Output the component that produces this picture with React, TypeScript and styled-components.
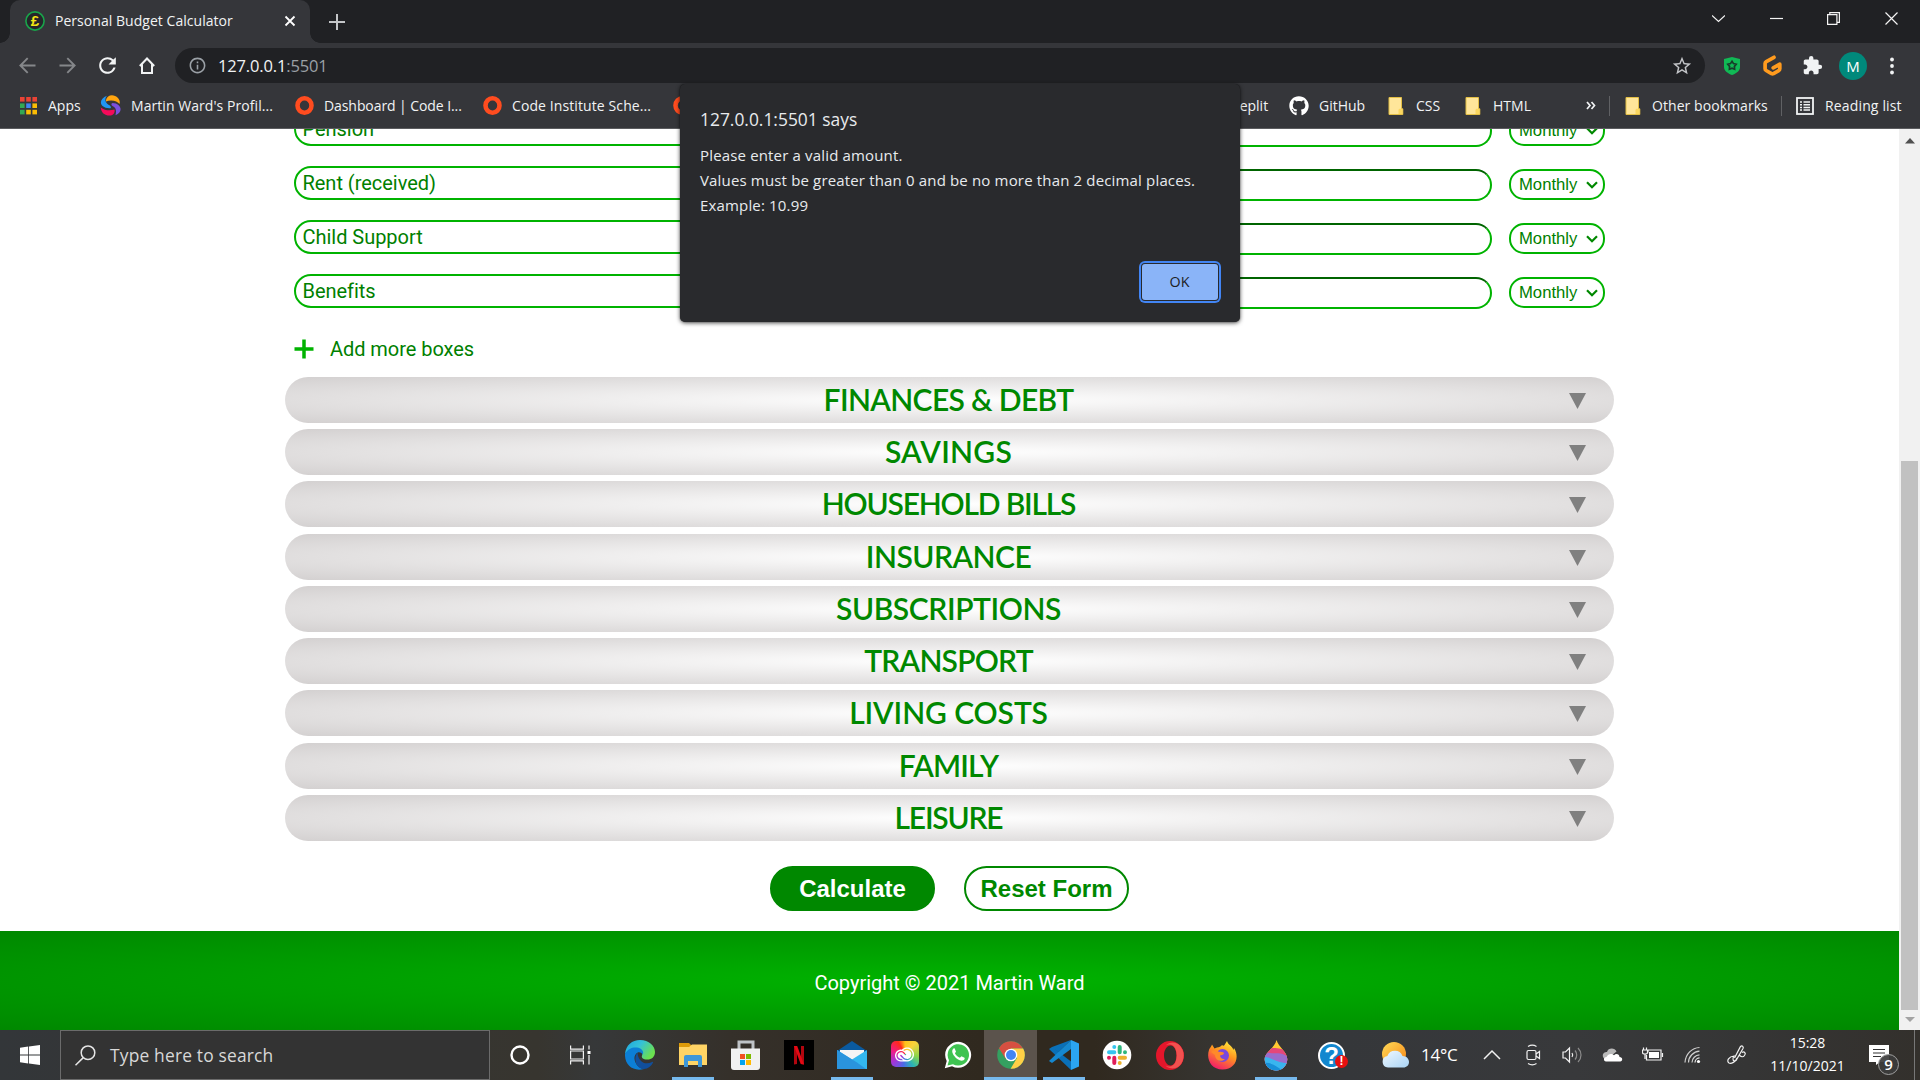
import React from "react";
import styled, { createGlobalStyle, css } from "styled-components";
import { FaGithub } from "react-icons/fa";
import { MdExtension, MdRefresh, MdStarBorder, MdInfoOutline } from "react-icons/md";
import { SiAdobecreativecloud } from "react-icons/si";

const ui = `"Open Sans", "Noto Sans", sans-serif`;
const arial = `"Liberation Sans", Arial, sans-serif`;
const roboto = `Roboto, "Liberation Sans", sans-serif`;

const GlobalStyle = createGlobalStyle`
  * { box-sizing: border-box; }
  html, body { margin: 0; padding: 0; background: #fff; overflow: hidden; }
  svg { display: block; flex: none; }
`;

const Screen = styled.div`
  position: relative;
  display: flex;
  flex-direction: column;
  width: 1920px;
  height: 1080px;
  overflow: hidden;
  font-family: ${ui};
`;

const Label = styled.span<{ $size?: number; $ls?: number; $color?: string }>`
  font-size: ${(p) => p.$size ?? 14}px;
  letter-spacing: ${(p) => p.$ls ?? 0}px;
  color: ${(p) => p.$color ?? "#f1f3f4"};
  white-space: nowrap;
  line-height: 20px;
`;

/* Browser chrome */
const TitleBar = styled.div`
  display: flex;
  height: 43px;
  padding-left: 10px;
  background: #202124;
`;

const tabFoot = css`
  content: "";
  position: absolute;
  bottom: 0;
  width: 10px;
  height: 10px;
`;

const Tab = styled.div`
  position: relative;
  display: flex;
  align-items: center;
  width: 300px;
  padding: 0 14px 2px 15px;
  border-radius: 10px 10px 0 0;
  background: #35363a;
  &::before {
    ${tabFoot}
    left: -10px;
    background: radial-gradient(circle at 0 0, transparent 9.5px, #35363a 10px);
  }
  &::after {
    ${tabFoot}
    right: -10px;
    background: radial-gradient(circle at 100% 0, transparent 9.5px, #35363a 10px);
  }
`;

const TabTitle = styled(Label)`
  flex: 1;
  padding-left: 10px;
`;

const NewTab = styled.div`
  display: flex;
  align-items: center;
  width: 54px;
  justify-content: center;
`;

const WindowControls = styled.div`
  display: flex;
  align-items: center;
  height: 37px;
  margin-left: auto;
`;

const ControlSlot = styled.div`
  display: flex;
  justify-content: center;
  width: 57.5px;
`;

const Toolbar = styled.div`
  display: flex;
  align-items: center;
  height: 45px;
  padding-left: 7px;
  background: #35363a;
`;

const ToolSlot = styled.div<{ $w?: number }>`
  display: flex;
  flex: none;
  justify-content: center;
  align-items: center;
  width: ${(p) => p.$w ?? 40}px;
  height: 35px;
`;

const AddressBar = styled.div`
  display: flex;
  flex: none;
  align-items: center;
  width: 1530px;
  height: 35px;
  margin-left: 8px;
  padding: 0 12px 0 13px;
  border-radius: 18px;
  background: #202124;
`;

const Url = styled(Label)`
  flex: 1;
  padding-left: 11px;
  em {
    font-style: normal;
    color: #9aa0a6;
  }
`;

const Avatar = styled.div`
  display: flex;
  align-items: center;
  justify-content: center;
  width: 28px;
  height: 28px;
  border-radius: 50%;
  background: #00897b;
  color: #fff;
  font-size: 15px;
`;

const BookmarkBar = styled.div`
  display: flex;
  align-items: center;
  height: 41px;
  padding: 0 0 5px 20px;
  border-bottom: 1px solid #5b5c5f;
  background: #35363a;
`;

const Bookmark = styled.div<{ $w: number; $gap?: number }>`
  display: flex;
  flex: none;
  align-items: center;
  gap: ${(p) => p.$gap ?? 10}px;
  width: ${(p) => p.$w}px;
  height: 24px;
`;

const BarDivider = styled.div<{ $gap: number }>`
  width: 1px;
  height: 20px;
  margin-right: ${(p) => p.$gap}px;
  background: #606164;
`;

/* Page */
const Viewport = styled.div`
  display: flex;
  height: 901px;
  overflow: hidden;
`;

const Page = styled.div`
  display: flex;
  flex-direction: column;
  align-items: center;
  width: 1899px;
  background: #fff;
`;

const Form = styled.main`
  width: 1329px;
  height: 802px;
  flex: none;
  overflow: hidden;
`;

const Rows = styled.div`
  display: flex;
  flex-direction: column;
  gap: 20px;
  margin-top: -17px;
  padding: 0 9px;
`;

const Row = styled.div`
  display: grid;
  grid-template-columns: 598px 1fr 96px;
  column-gap: 17px;
  height: 34px;
`;

const NameBox = styled.div`
  height: 34px;
  padding-left: 6.5px;
  border: 2px solid #00b300;
  border-radius: 17px;
  font: 20px/31px ${roboto};
  letter-spacing: -0.03px;
  color: #008000;
`;

const AmountBox = styled.div`
  height: 32px;
  margin-top: 3px;
  border: 2px solid #00b300;
  border-top-color: #006400;
  border-left-color: #006400;
  border-radius: 16px;
`;

const Period = styled.div`
  display: flex;
  align-items: center;
  justify-content: space-between;
  height: 31px;
  margin-top: 3px;
  padding: 0 5px 0 8px;
  border: 2px solid #00b300;
  border-radius: 15px;
  font: 16.67px/27px ${arial};
  color: #008000;
`;

const AddMore = styled.div`
  display: flex;
  align-items: center;
  gap: 16px;
  height: 69px;
  padding: 13px 0 0 9px;
  font: 20px/24px ${roboto};
  letter-spacing: -0.05px;
  color: #008000;
`;

const Sections = styled.div`
  display: flex;
  flex-direction: column;
  gap: 6.22px;
`;

const Section = styled.div`
  display: grid;
  grid-template-columns: 44px 1fr 46px;
  align-items: center;
  height: 46px;
  border-radius: 23px;
  background: radial-gradient(#fff, #d3d0d0);
  svg {
    margin: 2px 0 0 1px;
  }
`;

const SectionTitle = styled.h2<{ $ls: number }>`
  margin: 0;
  padding-bottom: 2px;
  grid-column: 2;
  text-align: center;
  font: 600 30px/44px Lato, sans-serif;
  letter-spacing: ${(p) => p.$ls}px;
  color: #008800;
`;

const Actions = styled.div`
  display: flex;
  justify-content: center;
  gap: 29px;
  padding-top: 25px;
`;

const Action = styled.button<{ $solid?: boolean }>`
  width: 165px;
  height: 45px;
  padding: 0;
  border: 2px solid #008800;
  border-radius: 23px;
  background: ${(p) => (p.$solid ? "#008800" : "#fff")};
  color: ${(p) => (p.$solid ? "#fff" : "#008800")};
  font: bold 24px/41px ${arial};
`;

const Footer = styled.footer`
  display: flex;
  align-items: center;
  justify-content: center;
  width: 100%;
  height: 99px;
  padding-top: 5px;
  background: radial-gradient(#00b300, #008800);
  color: #fff;
  font: 400 20px/24px ${roboto};
`;

const ScrollTrack = styled.div`
  display: flex;
  flex-direction: column;
  align-items: center;
  width: 21px;
  padding: 9px 0 8px;
  background: #f1f1f1;
`;

const ScrollThumb = styled.div`
  width: 17px;
  height: 549px;
  margin-top: auto;
  margin-bottom: 7px;
  background: #c1c1c1;
`;

/* Alert dialog, floats over the browser window */
const Dialog = styled.div`
  position: absolute;
  left: 680px;
  top: 84px;
  display: flex;
  flex-direction: column;
  width: 560px;
  height: 238px;
  padding: 22px 19px 19px 20px;
  border-radius: 5px;
  background: #292a2d;
  box-shadow: 0 1px 4px rgba(0, 0, 0, 0.7), 0 0 1px rgba(0, 0, 0, 0.6);
`;

const DialogTitle = styled.div`
  font-size: 17.4px;
  line-height: 26px;
  color: #e8eaed;
`;

const DialogText = styled.div`
  margin-top: 11px;
  display: flex;
  flex-direction: column;
`;

const DialogLine = styled(Label)`
  font-size: 15px;
  letter-spacing: 0.16px;
  line-height: 25px;
  color: #e8eaed;
`;

const OkButton = styled.button`
  align-self: flex-end;
  width: 76px;
  height: 36px;
  margin: auto 3px 3px 0;
  padding: 0 1px 0 0;
  border: 0;
  border-radius: 3px;
  background: #8ab4f8;
  box-shadow: 0 0 0 1px #292a2d, 0 0 0 3px #4285f4;
  color: #202124;
  font: 14.3px/36px ${ui};
`;

/* Taskbar */
const Taskbar = styled.div`
  display: flex;
  height: 50px;
  background: linear-gradient(90deg, #333639 0, #37352f 28%, #363839 31%, #35302a 38%, #30291f 51%, #30291f 57%, #363430 63%, #35373a 70%, #38393b 82%, #353535 91%, #33302c 100%);
`;

const StartSlot = styled.div`
  display: flex;
  flex: none;
  align-items: center;
  justify-content: center;
  width: 60px;
`;

const Search = styled.div`
  display: flex;
  flex: none;
  align-items: center;
  gap: 14px;
  width: 430px;
  padding-left: 14px;
  border: 1px solid #6b6b6b;
  background: #333;
`;

const AppButton = styled.div<{ $w?: number; $pad?: number; $active?: boolean; $running?: boolean }>`
  display: flex;
  flex: none;
  align-items: center;
  justify-content: center;
  position: relative;
  width: ${(p) => p.$w ?? 53}px;
  height: 50px;
  padding-left: ${(p) => p.$pad ?? 0}px;
  background: ${(p) => (p.$active ? "#5b534c" : "transparent")};
  &::after {
    content: "";
    position: absolute;
    bottom: 0;
    left: ${(p) => (p.$active ? 0 : 6)}px;
    right: ${(p) => (p.$active ? 0 : 5)}px;
    height: 3px;
    background: ${(p) => (p.$active || p.$running ? "#76b9ed" : "transparent")};
  }
`;

const TrayBar = styled.div`
  display: flex;
  flex: none;
  width: 538px;
  margin-left: auto;
`;

const TraySlot = styled.div<{ $w: number }>`
  display: flex;
  align-items: center;
  flex: none;
  width: ${(p) => p.$w}px;
`;

const Clock = styled.div`
  display: flex;
  flex-direction: column;
  align-items: center;
  justify-content: center;
  gap: 3px;
  width: 85px;
  padding-bottom: 1px;
`;

const NoteSlot = styled.div`
  position: relative;
  width: 48px;
  padding: 15px 0 0 19px;
`;

const NoteBadge = styled.div`
  position: absolute;
  left: 28px;
  top: 24px;
  width: 21px;
  height: 21px;
  border: 1px solid #a0a0a0;
  border-radius: 50%;
  background: rgba(60, 60, 60, 0.92);
  color: #fff;
  font: 600 15px/19px ${ui};
  text-align: center;
`;

const DesktopEdge = styled.div`
  width: 1px;
  margin-left: auto;
  margin-right: 5px;
  background: #777;
`;

const Favicon = () => (
  <svg width="20" height="20" viewBox="0 0 20 20">
    <circle cx="10" cy="10" r="9.100" fill="#25262a" stroke="#19a44a" strokeWidth="1.600" />
    <text x="10" y="15.200" textAnchor="middle" fontFamily="Liberation Sans" fontWeight="700" fontSize="15" fill="#f5e614">£</text>
  </svg>
);

const AppsGrid = () => {
  const c = ["#ea4335", "#ea4335", "#ea4335", "#34a853", "#4285f4", "#fbbc04", "#34a853", "#fbbc04", "#fbbc04"];
  return (
    <svg width="18" height="18" viewBox="0 0 18 18">
      {c.map((f, i) => (
        <rect key={i} x={(i % 3) * 6.2} y={Math.floor(i / 3) * 6.4} width="4.6" height="4.6" fill={f} />
      ))}
    </svg>
  );
};

const Swirl = () => (
  <svg width="21" height="21" viewBox="0 0 21 21">
    <path d="M7 .8C-1.500 4-1.500 12.500 9.500 13.300 12 13.500 11 11 8.500 9.800 5.500 8 4 4.500 7 .8z" fill="#2196f3" />
    <path d="M6 5C7-.5 14-1.500 18 3c2 2.500 2 4 1.500 6C17.500 6.500 12 4 6 6.500z" fill="#ffa50f" />
    <path d="M12.500 8c8.500 0 11.500 9 3 12.200 1-4.500.8-7.200-3-9.200-1.500-.9-1.500-2.700 0-3z" fill="#7b4fe0" />
    <path d="M.8 12.500c4 3 9 3.500 13.700 2 .6 2.500-.5 5.500-3.500 6C5.500 21.200 1 18 .8 12.500z" fill="#f50a5a" />
  </svg>
);

const Ring = () => (
  <svg width="19" height="19" viewBox="0 0 19 19">
    <ellipse cx="9.500" cy="9.500" rx="7" ry="7.200" fill="none" stroke="#ff4c1f" strokeWidth="4.600" />
  </svg>
);

const Folder = () => (
  <svg width="16" height="18" viewBox="0 0 16 18">
    <path d="M1 .5h12.500v11.300h1.300v5.700H1z" fill="#ffe69a" stroke="#e3bf45" />
    <path d="M10.500 17v-3.700c0-1 .6-1.500 1.500-1.500h2.500V17z" fill="#fbd75f" />
  </svg>
);

const ReadingList = () => (
  <svg width="18" height="18" viewBox="0 0 18 18" fill="none" stroke="#f1f3f4">
    <rect x="1" y="1" width="16" height="16" strokeWidth="1.800" />
    <path d="M4 5h2M4 7.700h2M4 10.400h2M4 13.100h2M7.500 5H14M7.500 7.700H14M7.500 10.400H14M7.500 13.100H14" strokeWidth="1.500" />
  </svg>
);

const Arrow = ({ flip }: { flip?: boolean }) => (
  <svg width="17" height="17" viewBox="0 0 17 17" fill="none" stroke="#85878a" strokeWidth="1.900" transform={flip ? "scale(-1,1)" : undefined}>
    <path d="M16.500 8.500H1.500M8.700 1.200 1.400 8.500l7.300 7.300" />
  </svg>
);

const WindowIcon = ({ d }: { d: string }) => (
  <svg width="13" height="13" viewBox="0 0 13 13" fill="none" stroke="#f4f4f4" strokeWidth="1.200">
    <path d={d} />
  </svg>
);

const Shield = () => (
  <svg width="16" height="18" viewBox="0 0 16 18">
    <path d="M8 0 16 2v8c0 4-4 6.500-8 8-4-1.500-8-4-8-8V2z" fill="#10b955" />
    <path d="m8 4.300 1.500 2.300 2.700.7-1.800 2.100.2 2.800L8 11.200l-2.600 1 .2-2.800-1.800-2.100 2.700-.7z" fill="none" stroke="#183b2a" strokeWidth="1.700" />
  </svg>
);

const Gitpod = () => (
  <svg width="19" height="21" viewBox="0 0 19 21" fill="none" stroke="#ff9b1e" strokeWidth="3.700" strokeLinejoin="round">
    <path d="M11 2.300 3.300 6.600c-.8.500-1.200 1-1.200 2v5.200c0 .8.300 1.300 1 1.700l5.400 3.100c.7.300 1.300.3 2 0l5.200-3c.7-.4 1.100-1 1.100-1.800V9.200l-6.600 3.600" strokeLinecap="round" />
  </svg>
);

const PeriodArrow = () => (
  <svg width="12" height="8" viewBox="0 0 12 8" fill="none" stroke="#008800" strokeWidth="2.200">
    <path d="m1 1.200 5 5 5-5" />
  </svg>
);

const EdgeIcon = () => (
  <svg width="30" height="30" viewBox="0 0 30 30">
    <defs>
      <linearGradient id="edgeTop" x1="0" y1="0" x2="1" y2=".5">
        <stop offset="0" stopColor="#1ba5e0" />
        <stop offset=".5" stopColor="#35c1d8" />
        <stop offset="1" stopColor="#6be04f" />
      </linearGradient>
    </defs>
    <path d="M0 14C1 5 7 0 15 0c9 0 15 6 15 12 0 5-3.500 7.500-7.500 7.500-5 0-6.500-2-5.300-4.500C19 9.500 8 5 0 14z" fill="url(#edgeTop)" />
    <path d="M0 14C3 8 8 7 12 7.500c5 .6 7 4 5.800 7-3.500-5-8.800-1-8.300 4.500.4 5 5 9.500 9.500 10C8 32-.5 25 0 14z" fill="#0c7fd6" />
    <path d="M12.500 12.700C8 18 11 29 19 29c4 0 7.500-3 9-6.500.2-.6-.3-.8-.8-.5-7 3.600-14-.2-14.700-9.300z" fill="#114f9c" />
  </svg>
);

const ExplorerIcon = () => (
  <svg width="28" height="24" viewBox="0 0 28 24">
    <path d="M0 0h10l3 3v3H0z" fill="#dd9b09" />
    <path d="M0 4h10l3-2.500h15V22H0z" fill="#ffd465" />
    <path d="M5 24V14q0-2 2-2h14q2 0 2 2v10h-4v-6H9v6z" fill="#3e97d8" />
  </svg>
);

const StoreIcon = () => (
  <svg width="30" height="30" viewBox="0 0 30 30">
    <path d="M8 9V2h14v7" fill="none" stroke="#bfc3c6" strokeWidth="3" />
    <path d="M0 8.500h29V27q0 3-3 3H3q-3 0-3-3z" fill="#f1f1f1" />
    <rect x="9" y="14" width="5" height="5" fill="#f25022" />
    <rect x="15" y="14" width="5" height="5" fill="#7fba00" />
    <rect x="9" y="20" width="5" height="5" fill="#00a4ef" />
    <rect x="15" y="20" width="5" height="5" fill="#ffb900" />
  </svg>
);

const NetflixIcon = () => (
  <svg width="30" height="30" viewBox="0 0 30 30">
    <rect width="30" height="30" fill="#000" />
    <path d="M10 6h3v18l-3 .5zM17 6h3v18.500l-3-.5z" fill="#b1060f" />
    <path d="M10 6h3.200L20 24.500l-3.300-.5z" fill="#e50914" />
  </svg>
);

const MailIcon = () => (
  <svg width="30" height="28" viewBox="0 0 30 28">
    <path d="M0 10 15 0l15 10v6H0z" fill="#0a5a9f" />
    <path d="M3 9h24v8L15 22 3 16z" fill="#f5f5f5" />
    <path d="m0 9 15 9.500L30 9v19H0z" fill="#33b7ef" />
    <path d="m0 9 20 12.500L29 28H0z" fill="#2a94dd" />
  </svg>
);

const CreativeTile = styled.div`
  display: flex;
  align-items: center;
  justify-content: center;
  width: 28px;
  height: 26px;
  margin-bottom: 2px;
  border-radius: 5px;
  background: conic-gradient(#ffc21a, #f7d13c 12%, #8bd64a 28%, #2bb5b4 40%, #4a6be8 52%, #a136d8 65%, #ec1c8c 78%, #ff2a1a 92%, #ffc21a);
`;

const WhatsAppIcon = () => (
  <svg width="28" height="28" viewBox="0 0 28 28">
    <path d="M.8 27.200 2.700 20A13 13 0 1 1 8 25.300z" fill="#fff" />
    <path d="m3.500 24.400 1.500-5.200a10.700 10.700 0 1 1 4 4z" fill="#3fc351" />
    <path d="M9.500 7.500c-2 1.500-1.500 4.500.8 7.500 2.500 3.500 6.500 5.700 9.200 4.200 1-.6 1.500-2 1-2.500l-3-1.500-1.600 1.600c-2-.6-4-2.500-5-4.500l1.100-1.500-1.200-3.100c-.2-.4-.9-.4-1.300-.2z" fill="#fff" />
  </svg>
);

const ChromeIcon = () => (
  <svg width="28" height="28" viewBox="0 0 28 28">
    <circle cx="14" cy="14" r="13.800" fill="#34a060" />
    <path d="M14 14 2 7.200A13.800 13.800 0 0 1 26 7.500H14z" fill="#d64f41" />
    <path d="M14 7.500h12.200A13.800 13.800 0 0 1 13.600 27.800L20 17z" fill="#ffcf46" />
    <path d="M2 7.200 8.400 17.500 14 14V7.500z" fill="#d64f41" />
    <circle cx="14" cy="14" r="6.300" fill="#fff" />
    <circle cx="14" cy="14" r="5" fill="#4285f4" />
  </svg>
);

const CodeIcon = () => (
  <svg width="30" height="30" viewBox="0 0 30 30">
    <path d="M22 0 9.500 12 3 7 0 9l22 21V21.500L3 7z" fill="#0a70b8" />
    <path d="M22 9 3 23l-3-2L22 0z" fill="#1588d0" />
    <path d="m22 0 8 3.500v23L22 30z" fill="#2ba5f2" />
  </svg>
);

const SlackIcon = () => (
  <svg width="30" height="30" viewBox="0 0 30 30" strokeWidth="4" strokeLinecap="round">
    <circle cx="15" cy="15" r="14.300" fill="#fff" />
    <path d="M12.300 7v0M7 12.300h5.300" stroke="#36c5f0" />
    <path d="M17.700 7v5.300M23 12.300v0" stroke="#2eb67d" />
    <path d="M12.300 17.700V23M7 17.700v0" stroke="#e01e5a" />
    <path d="M17.700 17.700H23M17.700 23v0" stroke="#ecb22e" />
  </svg>
);

const OperaIcon = () => (
  <svg width="28" height="29" viewBox="0 0 28 29">
    <path fillRule="evenodd" d="M14 0a14 14.500 0 1 0 0 29A14 14.500 0 1 0 14 0zm.5 4.500c3.600 0 6 4.500 6 10s-2.400 10-6 10-6.500-4.500-6.500-10 2.900-10 6.500-10z" fill="#e4162b" />
    <path d="M9.500 4.500C14 0 20 1 23.500 4.200a14 14.500 0 0 1 0 20.600C20 28 14 29 9.500 24.500c4 2 8 .8 10-3.500 1.600-4 1.600-9 0-13-2-4.300-6-5.500-10-3.500z" fill="#f2514f" />
  </svg>
);

const FirefoxIcon = () => (
  <svg width="29" height="29" viewBox="0 0 29 29">
    <defs>
      <linearGradient id="fox" x1=".8" y1="0" x2=".3" y2="1">
        <stop offset="0" stopColor="#fff13d" />
        <stop offset=".45" stopColor="#ff9420" />
        <stop offset="1" stopColor="#f2186c" />
      </linearGradient>
    </defs>
    <path d="M4 3.500 6.500 7.500 9 6.500c2 0 4-1 5-2.500 1 1 2 1 2.500 0L19 0c1 4 5 4.500 6.500 9L26 7c6 9 1.500 21.500-11.500 21.500C3 28.500-2 18 1 9c.7-2 1.500-2 3-5.500z" fill="url(#fox)" />
    <circle cx="14.500" cy="14.500" r="6.500" fill="#7a48dc" />
    <path d="M3 11c4-2 7-1 8 0 3-.5 5 .5 5 1.500-1 1.500-3 1.500-4 2 0 2 2 4 5 3.500-4 4-10 1-10-4z" fill="#ff8a2a" />
  </svg>
);

const PaintIcon = () => (
  <svg width="24" height="31" viewBox="0 0 24 31">
    <defs>
      <clipPath id="drop">
        <path d="M12.500 0c2 7 11 12 10.800 19.500C23 26 18 30.500 12 30.500S1 26 .7 19.500C.5 12 11 8 12.500 0z" />
      </clipPath>
    </defs>
    <g clipPath="url(#drop)">
      <rect width="24" height="31" fill="#ffc832" />
      <path d="M0 8c8 0 14-1 24 3v20H0z" fill="#e4477a" />
      <path d="M0 11c8 5 15-1 24 6v14H0z" fill="#9a6ccc" />
      <path d="M0 17c8 0 12 6 24 6v8H0z" fill="#39b5ee" />
      <path d="M0 23c8-1 13 4 20 8H0z" fill="#1890d8" />
    </g>
  </svg>
);

const HelpMark = styled.div`
  position: relative;
  width: 27px;
  height: 27px;
  border: 2px solid #fff;
  border-radius: 50%;
  background: #1287cf;
  color: #fff;
  font: bold 24px/23px ${arial};
  text-align: center;
`;

const HelpAlert = styled.div`
  position: absolute;
  right: -5px;
  bottom: -1px;
  width: 13px;
  height: 13px;
  border-radius: 50%;
  background: #e81010;
  font: bold 12px/13px ${arial};
`;

const WeatherIcon = () => (
  <svg width="27" height="26" viewBox="0 0 27 26">
    <defs>
      <linearGradient id="sun" x1="0" y1="0" x2="1" y2="1">
        <stop offset="0" stopColor="#ffdb59" />
        <stop offset="1" stopColor="#f78412" />
      </linearGradient>
      <linearGradient id="cloud" x1="0" y1="0" x2="1" y2="1">
        <stop offset="0" stopColor="#f0f8ff" />
        <stop offset="1" stopColor="#a9d4f5" />
      </linearGradient>
    </defs>
    <circle cx="12" cy="12" r="12" fill="url(#sun)" />
    <path d="M6 25.500a5.800 5.800 0 0 1-.6-11.500A8 8 0 0 1 20.500 14c4 0 6.500 2.800 6.500 6s-2.500 5.500-5.500 5.500z" fill="url(#cloud)" />
  </svg>
);

const TrayIcon = ({ w = 22, children }: { w?: number; children: React.ReactNode }) => (
  <svg width={w} height="22" viewBox={`0 0 ${w} 22`} fill="none" stroke="#f2f2f2" strokeWidth="1.200">
    {children}
  </svg>
);

const Tray = () => (
  <TrayBar>
    <TraySlot $w={39}><WeatherIcon /></TraySlot>
    <TraySlot $w={62}><Label $size={17} $color="#fff" $ls={-0.2}>14°C</Label></TraySlot>
    <TraySlot $w={39}>
      <TrayIcon w={18}><path d="m1 15 8-8 8 8" strokeWidth="1.500" /></TrayIcon>
    </TraySlot>
    <TraySlot $w={40}>
      <TrayIcon w={22}>
        <rect x="5" y="6.500" width="9" height="9" rx="1.500" />
        <path d="m14 10 3.500-2.500v7L14 12M6 2.500c2.500-1.500 6-1.500 8.500 0M6 19.500c2.500 1.500 6 1.500 8.500 0" />
      </TrayIcon>
    </TraySlot>
    <TraySlot $w={40}>
      <TrayIcon>
        <path d="M1 8h2.500L7.500 4v14l-4-4H1z" />
        <path d="M10 9c.9 1.200.9 2.800 0 4" />
        <path d="M13 6.500c2.300 2.500 2.300 6.500 0 9M16 4c4 4 4 10 0 14" stroke="#8c8c8c" />
      </TrayIcon>
    </TraySlot>
    <TraySlot $w={40}>
      <TrayIcon>
        <path d="M1 13c-1-4 2-5 4-5 1-4.500 8-4.500 9.500-.5L9 12l-6 4z" fill="#b9b9b9" stroke="none" />
        <path d="M4 17.500c-2.800-.3-2.800-4.300.5-4.500C6 9.500 10 9 12 11.300c2-2.300 5.500-1 5.500 1.700 3.500 0 3.500 4.300.7 4.500z" fill="#fff" stroke="none" />
      </TrayIcon>
    </TraySlot>
    <TraySlot $w={42}>
      <TrayIcon>
        <path d="M6 8.500V6h13v10H4.500v-5M20.500 9v4M1.500 3.500V6M4.500 3.500V6M.5 6h5v2.500c0 1-1 1.500-2.500 1.500S.500 9.500.5 8.500zM3 10v5" />
        <path d="M7 8h10v6H7z" fill="#fff" stroke="none" />
      </TrayIcon>
    </TraySlot>
    <TraySlot $w={42}>
      <TrayIcon w={18}>
        <path d="M1 18.500C1.500 10 8 3.800 15.500 3.500M4.500 18.500c0-6 5-11 11-11.300M8 18.500c0-4 3.500-7.400 7.500-7.600" stroke="#d0d0d0" />
        <path d="M11 18.500c0-2.500 2-4.500 4.500-4.600" />
        <circle cx="14.500" cy="17.500" r="1.600" fill="#fff" stroke="none" />
      </TrayIcon>
    </TraySlot>
    <TraySlot $w={39}>
      <TrayIcon>
        <path d="M11 14c-1 4-6 6-8 5-3-2 0-6.500 5-7-2 3-1 6 2 4.500l7-12c.8-1.500-.7-3.500-2.500-2L8.500 14M13 11c2 2 4 2.500 5.500.5 2-2.500-.5-4.500-2.500-3" />
      </TrayIcon>
    </TraySlot>
    <Clock>
      <Label $color="#fff">15:28</Label>
      <Label $color="#fff">11/10/2021</Label>
    </Clock>
    <NoteSlot>
      <svg width="20" height="20" viewBox="0 0 20 20">
        <path d="M0 0h20v17h-9l-4 3v-3H0z" fill="#fff" />
        <path d="M4 4.500h12M4 8h12M4 11.500h8" stroke="#333" strokeWidth="1.200" />
      </svg>
      <NoteBadge>9</NoteBadge>
    </NoteSlot>
    <DesktopEdge />
  </TrayBar>
);

const rows = ["Pension", "Rent (received)", "Child Support", "Benefits"];
const sections: [string, number][] = [
  ["FINANCES & DEBT", -0.65],
  ["SAVINGS", 0.26],
  ["HOUSEHOLD BILLS", -1.2],
  ["INSURANCE", -0.54],
  ["SUBSCRIPTIONS", -0.42],
  ["TRANSPORT", -0.8],
  ["LIVING COSTS", -0.1],
  ["FAMILY", -0.8],
  ["LEISURE", -1.2],
];

export default function App() {
  return (
    <Screen>
      <GlobalStyle />
      <TitleBar>
        <Tab>
          <Favicon />
          <TabTitle $ls={0.04}>Personal Budget Calculator</TabTitle>
          <svg width="12" height="12" viewBox="0 0 12 12" stroke="#fff" strokeWidth="1.800">
            <path d="m1.500 1.500 9 9m0-9-9 9" />
          </svg>
        </Tab>
        <NewTab>
          <svg width="16" height="16" viewBox="0 0 16 16" stroke="#c3c5c8" strokeWidth="2">
            <path d="M8 0v16M0 8h16" />
          </svg>
        </NewTab>
        <WindowControls>
          <ControlSlot><WindowIcon d="m0 3.500 6.500 6L13 3.500" /></ControlSlot>
          <ControlSlot><WindowIcon d="M0 6.500h13" /></ControlSlot>
          <ControlSlot><WindowIcon d="M.6 2.600h9.300v9.800H.6zM2.800 2.600V.6h9.600v9.800H10" /></ControlSlot>
          <ControlSlot><WindowIcon d="m.5.5 12 12m0-12-12 12" /></ControlSlot>
        </WindowControls>
      </TitleBar>
      <Toolbar>
        <ToolSlot><Arrow /></ToolSlot>
        <ToolSlot><Arrow flip /></ToolSlot>
        <ToolSlot><MdRefresh size={25} color="#f1f3f4" /></ToolSlot>
        <ToolSlot>
          <svg width="16" height="17" viewBox="0 0 16 17" fill="none" stroke="#f1f3f4" strokeWidth="2">
            <path d="M.8 9 8 1.500 15.200 9M3 7.500V16h10V7.500" />
          </svg>
        </ToolSlot>
        <AddressBar>
          <MdInfoOutline size={19} color="#9aa0a6" />
          <Url $size={16.5} $ls={-0.15}>127.0.0.1<em>:5501</em></Url>
          <MdStarBorder size={22} color="#c3c5c8" />
        </AddressBar>
        <ToolSlot $w={54}><Shield /></ToolSlot>
        <ToolSlot $w={26}><Gitpod /></ToolSlot>
        <ToolSlot $w={54}><MdExtension size={21} color="#f1f3f4" /></ToolSlot>
        <ToolSlot $w={28}><Avatar>M</Avatar></ToolSlot>
        <ToolSlot $w={50}>
          <svg width="4" height="18" viewBox="0 0 4 18" fill="#f1f3f4">
            <circle cx="2" cy="2.500" r="1.900" /><circle cx="2" cy="9" r="1.900" /><circle cx="2" cy="15.500" r="1.900" />
          </svg>
        </ToolSlot>
      </Toolbar>
      <BookmarkBar>
        <Bookmark $w={80}><AppsGrid /><Label>Apps</Label></Bookmark>
        <Bookmark $w={195}><Swirl /><Label $ls={0.06}>Martin Ward's Profil...</Label></Bookmark>
        <Bookmark $w={188}><Ring /><Label $ls={-0.08}>Dashboard | Code I...</Label></Bookmark>
        <Bookmark $w={190}><Ring /><Label $ls={0.1}>Code Institute Sche...</Label></Bookmark>
        <Bookmark $w={558}><Ring /></Bookmark>
        <Bookmark $w={58}><Label>Replit</Label></Bookmark>
        <Bookmark $w={99}><FaGithub size={20} color="#fff" /><Label>GitHub</Label></Bookmark>
        <Bookmark $w={77} $gap={12}><Folder /><Label>CSS</Label></Bookmark>
        <Bookmark $w={121} $gap={12}><Folder /><Label>HTML</Label></Bookmark>
        <Bookmark $w={23}>
          <svg width="10" height="9" viewBox="0 0 10 9" fill="none" stroke="#f1f3f4" strokeWidth="1.700">
            <path d="m1 1 3 3.500L1 8M5.500 1l3 3.500-3 3.500" />
          </svg>
        </Bookmark>
        <BarDivider $gap={15} />
        <Bookmark $w={156} $gap={11}><Folder /><Label $ls={0.06}>Other bookmarks</Label></Bookmark>
        <BarDivider $gap={14} />
        <Bookmark $w={120} $gap={11}><ReadingList /><Label $ls={0.15}>Reading list</Label></Bookmark>
      </BookmarkBar>

      <Viewport>
        <Page>
          <Form>
            <Rows>
              {rows.map((r) => (
                <Row key={r}>
                  <NameBox>{r}</NameBox>
                  <AmountBox />
                  <Period>Monthly<PeriodArrow /></Period>
                </Row>
              ))}
            </Rows>
            <AddMore>
              <svg width="20" height="20" viewBox="0 0 20 20" stroke="#00b300" strokeWidth="3.500">
                <path d="M10 .5v19M.5 10h19" />
              </svg>
              Add more boxes
            </AddMore>
            <Sections>
              {sections.map(([name, ls]) => (
                <Section key={name}>
                  <SectionTitle $ls={ls}>{name}</SectionTitle>
                  <svg width="17" height="16" viewBox="0 0 17 16" fill="#808080">
                    <path d="M0 0h17L8.500 16z" />
                  </svg>
                </Section>
              ))}
            </Sections>
            <Actions>
              <Action $solid>Calculate</Action>
              <Action>Reset Form</Action>
            </Actions>
          </Form>
          <Footer>Copyright © 2021 Martin Ward</Footer>
        </Page>
        <ScrollTrack>
          <svg width="10" height="6" viewBox="0 0 10 6" fill="#505050"><path d="M0 5.500h10L5 0z" /></svg>
          <ScrollThumb />
          <svg width="10" height="5" viewBox="0 0 10 5" fill="#a3a3a3"><path d="M0 0h10L5 5z" /></svg>
        </ScrollTrack>
      </Viewport>

      <Taskbar>
        <StartSlot>
          <svg width="20" height="20" viewBox="0 0 20 20" fill="#fff">
            <path d="M0 2.700 8.200 1.600v8H0zM9 1.500 20 0v9.600H9zM0 10.400h8.200v8L0 17.300zM9 10.400h11V20L9 18.500z" />
          </svg>
        </StartSlot>
        <Search>
          <svg width="21" height="21" viewBox="0 0 21 21" fill="none" stroke="#e6e6e6" strokeWidth="1.500">
            <circle cx="13" cy="7.700" r="6.800" /><path d="m8.300 12.600-7.800 7.600" />
          </svg>
          <Label $size={17.4} $ls={0.18} $color="#d8d8d8">Type here to search</Label>
        </Search>
        <AppButton $w={60}>
          <svg width="20" height="20" viewBox="0 0 20 20"><circle cx="10" cy="10" r="8.500" fill="none" stroke="#fff" strokeWidth="2.400" /></svg>
        </AppButton>
        <AppButton $w={60}>
          <svg width="21" height="20" viewBox="0 0 21 20" fill="none" stroke="#f2f2f2" strokeWidth="1.200">
            <path d="M.6.500v3.600h12.800V.5M.6 19.500v-3.600h12.800v3.600M.6 6h12.800v8H.6zM19 .5v4M19 10v9.500" />
            <path d="M17.500 6h3v3h-3z" fill="#fff" stroke="none" />
          </svg>
        </AppButton>
        <AppButton $w={56} $pad={4}><EdgeIcon /></AppButton>
        <AppButton $running><ExplorerIcon /></AppButton>
        <AppButton><StoreIcon /></AppButton>
        <AppButton><NetflixIcon /></AppButton>
        <AppButton $running><MailIcon /></AppButton>
        <AppButton><CreativeTile><SiAdobecreativecloud size={19} color="#fff" /></CreativeTile></AppButton>
        <AppButton><WhatsAppIcon /></AppButton>
        <AppButton $active><ChromeIcon /></AppButton>
        <AppButton $running><CodeIcon /></AppButton>
        <AppButton><SlackIcon /></AppButton>
        <AppButton><OperaIcon /></AppButton>
        <AppButton><FirefoxIcon /></AppButton>
        <AppButton $running><PaintIcon /></AppButton>
        <AppButton $w={59}><HelpMark>?<HelpAlert>!</HelpAlert></HelpMark></AppButton>
        <Tray />
      </Taskbar>

      <Dialog>
        <DialogTitle>127.0.0.1:5501 says</DialogTitle>
        <DialogText>
          <DialogLine>Please enter a valid amount.</DialogLine>
          <DialogLine>Values must be greater than 0 and be no more than 2 decimal places.</DialogLine>
          <DialogLine>Example: 10.99</DialogLine>
        </DialogText>
        <OkButton>OK</OkButton>
      </Dialog>
    </Screen>
  );
}
